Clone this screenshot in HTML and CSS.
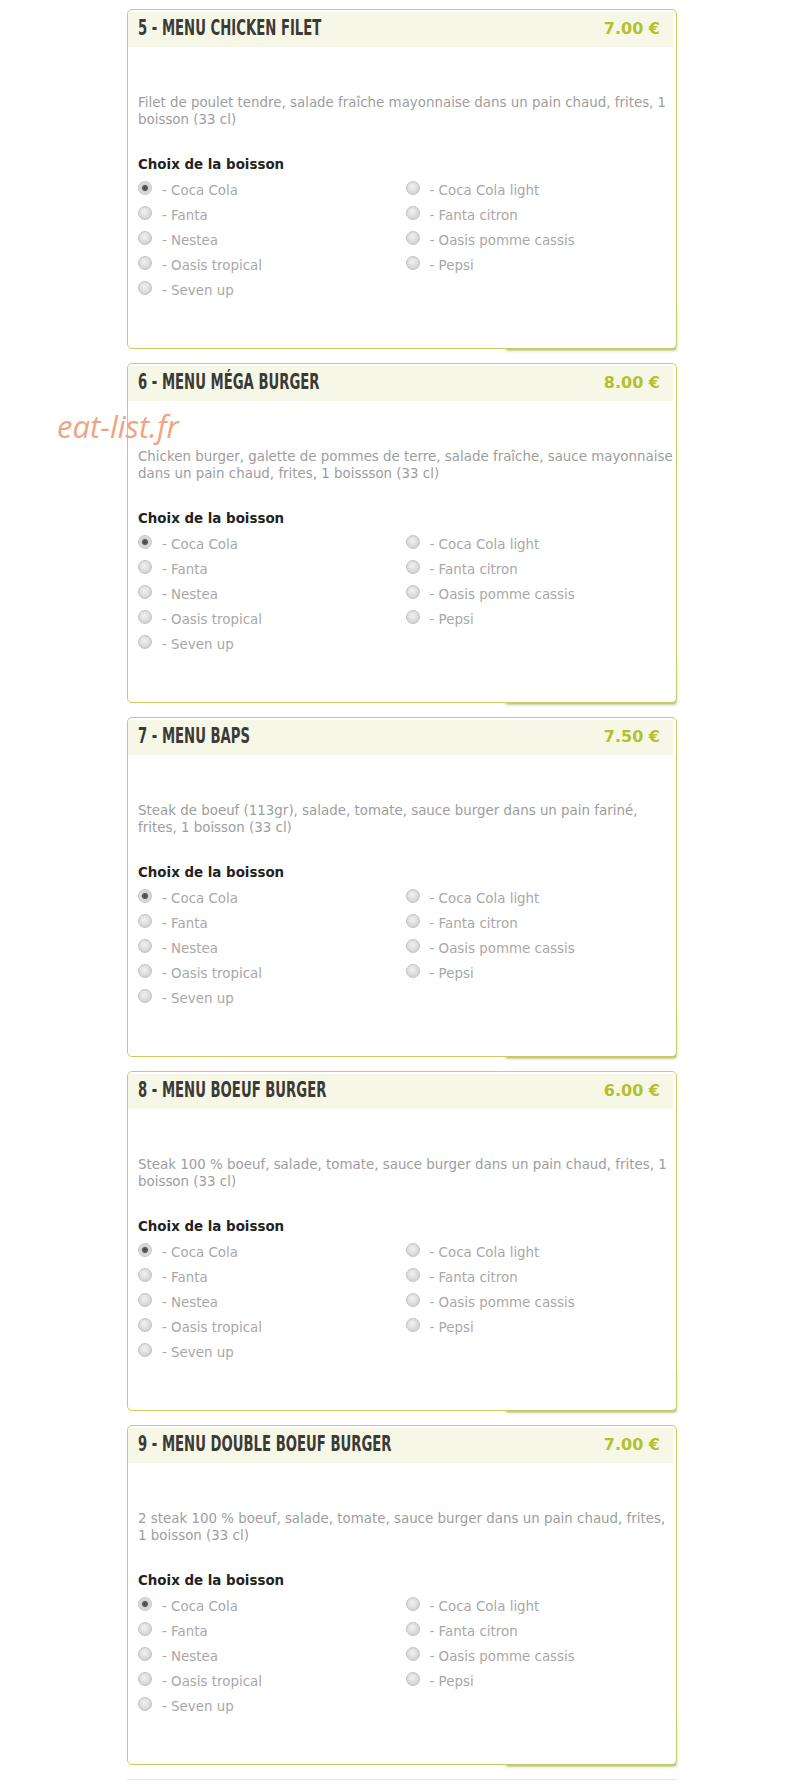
FILE: index.html
```html
<!DOCTYPE html>
<html lang="fr">
<head>
  <meta charset="UTF-8">
  <meta name="viewport" content="width=device-width, initial-scale=1.0">
  <title>Menus</title>
  <link rel="stylesheet" href="styles.css">
</head>
<body>

  <div class="menu-list">

    <!-- Menu 5 -->
    <div class="menu-card">
      <div class="menu-header">
        <h3 class="menu-title">5 - MENU CHICKEN FILET</h3>
        <span class="menu-price">7.00 €</span>
      </div>
      <p class="menu-desc">Filet de poulet tendre, salade fraîche mayonnaise dans un pain chaud, frites, 1 boisson (33 cl)</p>
      <div class="choice-title">Choix de la boisson</div>
      <div class="choice-grid">
        <label class="choice"><input type="radio" name="drink5" checked> - Coca Cola</label>
        <label class="choice"><input type="radio" name="drink5"> - Coca Cola light</label>
        <label class="choice"><input type="radio" name="drink5"> - Fanta</label>
        <label class="choice"><input type="radio" name="drink5"> - Fanta citron</label>
        <label class="choice"><input type="radio" name="drink5"> - Nestea</label>
        <label class="choice"><input type="radio" name="drink5"> - Oasis pomme cassis</label>
        <label class="choice"><input type="radio" name="drink5"> - Oasis tropical</label>
        <label class="choice"><input type="radio" name="drink5"> - Pepsi</label>
        <label class="choice"><input type="radio" name="drink5"> - Seven up</label>
      </div>
    </div>

    <!-- Menu 6 -->
    <div class="menu-card">
      <div class="menu-header">
        <h3 class="menu-title">6 - MENU MÉGA BURGER</h3>
        <span class="menu-price">8.00 €</span>
      </div>
      <p class="menu-desc">Chicken burger, galette de pommes de terre, salade fraîche, sauce mayonnaise dans un pain chaud, frites, 1 boissson (33 cl)</p>
      <div class="choice-title">Choix de la boisson</div>
      <div class="choice-grid">
        <label class="choice"><input type="radio" name="drink6" checked> - Coca Cola</label>
        <label class="choice"><input type="radio" name="drink6"> - Coca Cola light</label>
        <label class="choice"><input type="radio" name="drink6"> - Fanta</label>
        <label class="choice"><input type="radio" name="drink6"> - Fanta citron</label>
        <label class="choice"><input type="radio" name="drink6"> - Nestea</label>
        <label class="choice"><input type="radio" name="drink6"> - Oasis pomme cassis</label>
        <label class="choice"><input type="radio" name="drink6"> - Oasis tropical</label>
        <label class="choice"><input type="radio" name="drink6"> - Pepsi</label>
        <label class="choice"><input type="radio" name="drink6"> - Seven up</label>
      </div>
    </div>

    <!-- Menu 7 -->
    <div class="menu-card">
      <div class="menu-header">
        <h3 class="menu-title">7 - MENU BAPS</h3>
        <span class="menu-price">7.50 €</span>
      </div>
      <p class="menu-desc">Steak de boeuf (113gr), salade, tomate, sauce burger dans un pain fariné, frites, 1 boisson (33 cl)</p>
      <div class="choice-title">Choix de la boisson</div>
      <div class="choice-grid">
        <label class="choice"><input type="radio" name="drink7" checked> - Coca Cola</label>
        <label class="choice"><input type="radio" name="drink7"> - Coca Cola light</label>
        <label class="choice"><input type="radio" name="drink7"> - Fanta</label>
        <label class="choice"><input type="radio" name="drink7"> - Fanta citron</label>
        <label class="choice"><input type="radio" name="drink7"> - Nestea</label>
        <label class="choice"><input type="radio" name="drink7"> - Oasis pomme cassis</label>
        <label class="choice"><input type="radio" name="drink7"> - Oasis tropical</label>
        <label class="choice"><input type="radio" name="drink7"> - Pepsi</label>
        <label class="choice"><input type="radio" name="drink7"> - Seven up</label>
      </div>
    </div>

    <!-- Menu 8 -->
    <div class="menu-card">
      <div class="menu-header">
        <h3 class="menu-title">8 - MENU BOEUF BURGER</h3>
        <span class="menu-price">6.00 €</span>
      </div>
      <p class="menu-desc">Steak 100 % boeuf, salade, tomate, sauce burger dans un pain chaud, frites, 1 boisson (33 cl)</p>
      <div class="choice-title">Choix de la boisson</div>
      <div class="choice-grid">
        <label class="choice"><input type="radio" name="drink8" checked> - Coca Cola</label>
        <label class="choice"><input type="radio" name="drink8"> - Coca Cola light</label>
        <label class="choice"><input type="radio" name="drink8"> - Fanta</label>
        <label class="choice"><input type="radio" name="drink8"> - Fanta citron</label>
        <label class="choice"><input type="radio" name="drink8"> - Nestea</label>
        <label class="choice"><input type="radio" name="drink8"> - Oasis pomme cassis</label>
        <label class="choice"><input type="radio" name="drink8"> - Oasis tropical</label>
        <label class="choice"><input type="radio" name="drink8"> - Pepsi</label>
        <label class="choice"><input type="radio" name="drink8"> - Seven up</label>
      </div>
    </div>

    <!-- Menu 9 -->
    <div class="menu-card">
      <div class="menu-header">
        <h3 class="menu-title">9 - MENU DOUBLE BOEUF BURGER</h3>
        <span class="menu-price">7.00 €</span>
      </div>
      <p class="menu-desc">2 steak 100 % boeuf, salade, tomate, sauce burger dans un pain chaud, frites, 1 boisson (33 cl)</p>
      <div class="choice-title">Choix de la boisson</div>
      <div class="choice-grid">
        <label class="choice"><input type="radio" name="drink9" checked> - Coca Cola</label>
        <label class="choice"><input type="radio" name="drink9"> - Coca Cola light</label>
        <label class="choice"><input type="radio" name="drink9"> - Fanta</label>
        <label class="choice"><input type="radio" name="drink9"> - Fanta citron</label>
        <label class="choice"><input type="radio" name="drink9"> - Nestea</label>
        <label class="choice"><input type="radio" name="drink9"> - Oasis pomme cassis</label>
        <label class="choice"><input type="radio" name="drink9"> - Oasis tropical</label>
        <label class="choice"><input type="radio" name="drink9"> - Pepsi</label>
        <label class="choice"><input type="radio" name="drink9"> - Seven up</label>
      </div>
    </div>

    <div class="list-end"></div>
  </div>

  <!-- Watermark -->
  <div class="watermark">eat-list.fr</div>

</body>
</html>
```

FILE: styles.css
```css
body {
  margin: 0;
  background: #fff;
  font-family: 'DejaVu Sans', Tahoma, sans-serif;
}

.menu-list {
  width: 550px;
  margin: 9px 0 0 127px;
}

.menu-card {
  position: relative;
  box-sizing: border-box;
  height: 340px;
  margin-bottom: 14px;
  padding: 2px 3px 0 0;
  background: #fff;
  border: 1px solid #c5cd5c;
  border-radius: 5px;
}

/* lifted shadow on the bottom right corner */
.menu-card::after {
  content: '';
  position: absolute;
  right: 1px;
  bottom: 1px;
  width: 170px;
  height: 40px;
  box-shadow: 1px 3px 3px rgba(120, 135, 10, 0.75);
  z-index: -1;
}

.menu-header {
  display: flex;
  justify-content: space-between;
  align-items: center;
  height: 35px;
  box-sizing: border-box;
  padding: 0 13px 3px 10px;
  background: #f6f7e6;
}

/* no condensed face installed, so squeeze the bold one */
.menu-title {
  margin: 0;
  font-size: 21px;
  font-weight: bold;
  color: #3b3b36;
  white-space: nowrap;
  transform: scaleX(0.63);
  transform-origin: left center;
}

.menu-price {
  font-size: 16px;
  font-weight: bold;
  color: #b3c12c;
}

.menu-desc {
  margin: 47px 0 0 10px;
  font-size: 13.4px;
  line-height: 17px;
  color: #9d9d9d;
}

.choice-title {
  margin: 28px 0 0 10px;
  font-size: 13.4px;
  font-weight: bold;
  line-height: 17px;
  color: #222;
}

.choice-grid {
  display: grid;
  grid-template-columns: 1fr 1fr;
  row-gap: 3px;
  margin: 6px 0 0 10px;
}

.choice {
  display: flex;
  align-items: center;
  height: 22px;
  font-size: 13.4px;
  color: #a8a8a8;
}

.choice input {
  appearance: none;
  -webkit-appearance: none;
  width: 14px;
  height: 14px;
  margin: -5px 10px 0 0;
  border: 1px solid #c2c2c2;
  border-radius: 50%;
  background: radial-gradient(circle at 45% 40%, #f2f2f2, #d4d4d4 70%);
}

.choice input:checked {
  background: radial-gradient(circle, #4a4a4a 0, #5a5a5a 2.5px, #cfcfcf 3.5px, #e0e0e0 70%);
}

.list-end {
  height: 1px;
  background: #e6e6e6;
}

.watermark {
  position: absolute;
  top: 405px;
  left: 57px;
  font-family: 'Open Sans', sans-serif;
  font-style: italic;
  font-size: 31px;
  color: #f0a47f;
}
```
